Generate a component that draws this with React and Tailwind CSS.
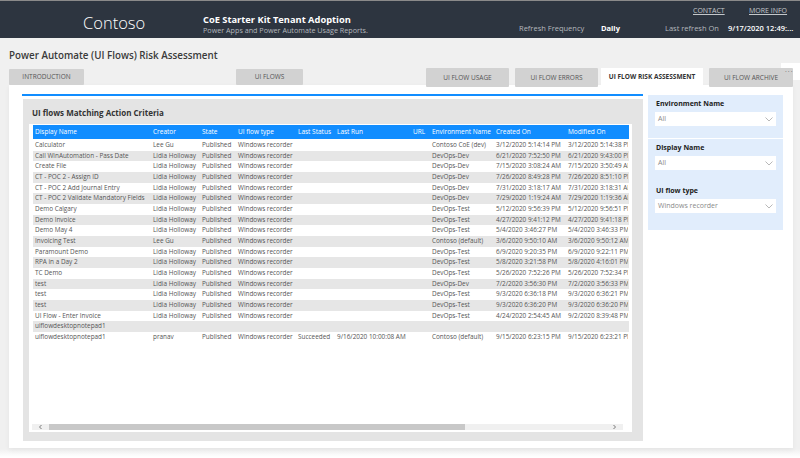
import React from 'react';

const cols = 'grid grid-cols-[118px_49px_36px_60px_39px_76px_19px_64px_72px_62px]';
const rows = [
  ['Calculator','Lee Gu','Published','Windows recorder','','','','Contoso CoE (dev)','3/12/2020 5:14:14 PM','3/12/2020 5:14:38 PM'],
  ['Call WinAutomation - Pass Date','Lidia Holloway','Published','Windows recorder','','','','DevOps-Dev','6/21/2020 7:52:50 PM','6/21/2020 9:43:00 PM'],
  ['Create File','Lidia Holloway','Published','Windows recorder','','','','DevOps-Dev','7/15/2020 3:08:24 AM','7/15/2020 3:50:49 AM'],
  ['CT - POC 2 - Assign ID','Lidia Holloway','Published','Windows recorder','','','','DevOps-Dev','7/26/2020 8:49:28 PM','7/26/2020 8:51:10 PM'],
  ['CT - POC 2 Add Journal Entry','Lidia Holloway','Published','Windows recorder','','','','DevOps-Dev','7/31/2020 3:18:17 AM','7/31/2020 3:18:31 AM'],
  ['CT - POC 2 Validate Mandatory Fields','Lidia Holloway','Published','Windows recorder','','','','DevOps-Dev','7/29/2020 1:19:24 AM','7/29/2020 1:19:36 AM'],
  ['Demo Calgary','Lidia Holloway','Published','Windows recorder','','','','DevOps-Test','5/12/2020 9:56:39 PM','5/12/2020 9:56:51 PM'],
  ['Demo Invoice','Lidia Holloway','Published','Windows recorder','','','','DevOps-Test','4/27/2020 9:41:12 PM','4/27/2020 9:41:18 PM'],
  ['Demo May 4','Lidia Holloway','Published','Windows recorder','','','','DevOps-Test','5/4/2020 3:46:27 PM','5/4/2020 3:46:33 PM'],
  ['Invoicing Test','Lee Gu','Published','Windows recorder','','','','Contoso (default)','3/6/2020 9:50:10 AM','3/6/2020 9:50:12 AM'],
  ['Paramount Demo','Lidia Holloway','Published','Windows recorder','','','','DevOps-Test','6/9/2020 9:20:35 PM','6/9/2020 9:22:11 PM'],
  ['RPA in a Day 2','Lidia Holloway','Published','Windows recorder','','','','DevOps-Test','5/8/2020 3:21:58 PM','5/8/2020 4:16:01 PM'],
  ['TC Demo','Lidia Holloway','Published','Windows recorder','','','','DevOps-Test','5/26/2020 7:52:26 PM','5/26/2020 7:52:34 PM'],
  ['test','Lidia Holloway','Published','Windows recorder','','','','DevOps-Dev','7/2/2020 3:56:30 PM','7/2/2020 3:56:33 PM'],
  ['test','Lidia Holloway','Published','Windows recorder','','','','DevOps-Test','9/3/2020 6:36:18 PM','9/3/2020 6:36:21 PM'],
  ['test','Lidia Holloway','Published','Windows recorder','','','','DevOps-Test','9/3/2020 6:36:20 PM','9/3/2020 6:36:20 PM'],
  ['UI Flow - Enter Invoice','Lidia Holloway','Published','Windows recorder','','','','DevOps-Test','4/24/2020 2:54:45 AM','9/2/2020 8:39:48 PM'],
  ['uiflowdesktopnotepad1','','','','','','','','',''],
  ['uiflowdesktopnotepad1','pranav','Published','Windows recorder','Succeeded','9/16/2020 10:00:08 AM','','Contoso (default)','9/15/2020 6:23:15 PM','9/15/2020 6:23:21 PM'],
];
const heads = ['Display Name','Creator','State','UI flow type','Last Status','Last Run','URL','Environment Name','Created On','Modified On'];

function Tab({ label, className }) {
  return (
    <div className={`flex items-center justify-center rounded-[1px] bg-[#d2d2d2] text-[6.5px] text-[#555] ${className}`}>
      {label}
    </div>
  );
}

function Slicer({ label, value, className }) {
  return (
    <div className={`px-[7px] ${className}`}>
      <div className="h-[11px] pl-[1px] text-[7px] leading-[11px] font-bold text-[#222]">{label}</div>
      <div className="mt-[3px] flex h-[14px] items-center justify-between bg-white pl-[3px] pr-[3px] text-[7px] text-[#8a8a8a]">
        <span>{value}</span>
        <svg width="8" height="5" viewBox="0 0 8 5" fill="none" stroke="#9a9a9a" strokeWidth="0.7">
          <path d="M0.5 0.5 L4 4 L7.5 0.5" />
        </svg>
      </div>
    </div>
  );
}

export default function App() {
  return (
    <div className="relative h-[458px] w-[800px] overflow-hidden bg-[linear-gradient(#f0f0f0_449px,#ffffff_457px)] font-['Open_Sans','Noto_Sans',sans-serif] antialiased">
      <header className="flex h-[38px] border-t border-[#8a8a8a] bg-[#2d3540] text-white">
        <div className="ml-[83px] mt-[8px] w-[120px] text-[16.5px] leading-[27px] font-light">Contoso</div>
        <div className="mt-[13px] w-[316px]">
          <div className="text-[9.3px] leading-[12px] font-bold">CoE Starter Kit Tenant Adoption</div>
          <div className="text-[7.2px] leading-[9px] text-[#b4b8bd]">Power Apps and Power Automate Usage Reports.</div>
        </div>
        <div className="flex-1">
          <div className="mt-[5px] flex h-[10px] items-center text-[7px] text-[#c4c7ca] underline">
            <span className="ml-[174px] w-[56px]">CONTACT</span>
            <span>MORE INFO</span>
          </div>
          <div className="mt-[7px] flex h-[12px] items-center text-[7.5px] text-[#b4b8bd]">
            <span className="w-[82px]">Refresh Frequency</span>
            <span className="w-[64px] font-bold text-white">Daily</span>
            <span className="w-[63px]">Last refresh On</span>
            <span className="whitespace-nowrap font-semibold text-white">9/17/2020 12:49:...</span>
          </div>
        </div>
      </header>

      <h1 className="ml-[9px] mt-[11px] h-[13px] text-[9.8px] leading-[13px] font-semibold text-[#3a3a3a]">
        Power Automate (UI Flows) Risk Assessment
      </h1>

      <div className="absolute left-[781px] top-[63px] h-[17px] w-[19px] bg-white" />

      <nav className="relative ml-[9px] mt-[6px] flex h-[17px]">
        <Tab label="INTRODUCTION" className="mt-[1px] h-[16px] w-[75px]" />
        <Tab label="UI FLOWS" className="ml-[152px] mt-[1px] h-[16px] w-[67px]" />
        <Tab label="UI FLOW USAGE" className="ml-[123px] h-[19px] w-[83px]" />
        <Tab label="UI FLOW ERRORS" className="ml-[6px] h-[19px] w-[83px]" />
        <div className="ml-[3px] flex h-[17px] w-[102px] items-center justify-center bg-white text-[6.5px] font-bold text-[#333]">
          UI FLOW RISK ASSESSMENT
        </div>
        <Tab label="UI FLOW ARCHIVE" className="ml-[6px] h-[19px] w-[84px]" />
      </nav>

      <main className="ml-[9px] flex h-[363px] w-[784px] bg-white pl-[13px] pt-[9px] shadow-[0_2px_5px_rgba(0,0,0,0.05)]">
        <section className="w-[621px]">
          <div className="h-[2px] bg-[#118dff]" />
          <div className="ml-[1px] mt-[3px] h-[342px] w-[620px] bg-[#e4e4e4] pl-[6px] pt-[8px]">
            <h2 className="ml-[3px] h-[11px] text-[8px] leading-[11px] font-bold text-[#333]">UI flows Matching Action Criteria</h2>
            <div className="mt-[6px] flex h-[308px] w-[603px] flex-col bg-white pt-[1px]">
              <div className="ml-[4px] w-[596px] flex-1 overflow-hidden">
                <div className={`${cols} h-[14px] w-[596px] bg-[#118dff] text-[6.5px] leading-[14px] text-white`}>
                  {heads.map((h) => (
                    <div key={h} className="overflow-hidden whitespace-nowrap pl-[2px]">{h}</div>
                  ))}
                </div>
                <div className="pt-[1px] text-[6.4px] text-[#555]">
                  {rows.map((r, i) => (
                    <div key={i} className={`${cols} h-[10.67px] w-[596px] leading-[10.67px] ${i % 2 ? 'bg-[#e6e6e6]' : 'bg-white'}`}>
                      {r.map((c, j) => (
                        <div key={j} className="overflow-hidden whitespace-nowrap pl-[2px]">{c}</div>
                      ))}
                    </div>
                  ))}
                </div>
              </div>
              <div className="mb-[2px] ml-[3px] flex h-[6px] w-[591px] shrink-0 items-center bg-[#f0f0f0]">
                <svg width="17" height="6" viewBox="0 0 17 6" fill="none" stroke="#444" strokeWidth="0.7" className="shrink-0">
                  <path d="M9.5 1 L7.5 3 L9.5 5" />
                </svg>
                <div className="h-[6px] w-[416px] bg-[#c8c8c8]" />
                <div className="flex-1" />
                <svg width="17" height="6" viewBox="0 0 17 6" fill="none" stroke="#444" strokeWidth="0.7" className="shrink-0">
                  <path d="M7.5 1 L9.5 3 L7.5 5" />
                </svg>
              </div>
            </div>
          </div>
        </section>

        <aside className="ml-[5px] mt-[1px] h-[135px] w-[135px] bg-[#e1edfc] pt-[3px]">
          <Slicer label="Environment Name" value="All" className="h-[40px]" />
          <div className="h-px bg-white" />
          <Slicer label="Display Name" value="All" className="h-[46px] pt-[3px]" />
          <Slicer label="UI flow type" value="Windows recorder" />
        </aside>
      </main>

      <div className="absolute left-[785px] top-[65px] text-[7px] tracking-[1px] text-[#777]">...</div>
    </div>
  );
}
